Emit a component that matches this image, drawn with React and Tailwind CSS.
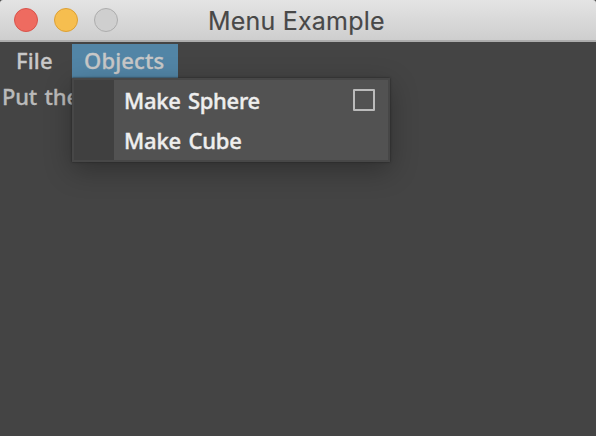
function TitleBar() {
  return (
    <header className="relative flex h-[42px] items-center rounded-t-[3px] border-b-2 border-[#acacac] bg-linear-to-b from-[#e4e4e4] to-[#cecece] pl-3.5">
      <div className="flex gap-4">
        <span className="size-6 rounded-full border border-[#d9534b] bg-[#ee6b60]" />
        <span className="size-6 rounded-full border border-[#dda034] bg-[#f6be4f]" />
        <span className="size-6 rounded-full border border-[#adadad] bg-[#cfcfcf]" />
      </div>
      <h1 className='absolute left-[208px] top-0 whitespace-nowrap font-["Inter",sans-serif] text-[25px] leading-[42px] font-normal tracking-[0.2px] text-[#484848] [-webkit-text-stroke:0.15px_#484848]'>
        Menu Example
      </h1>
    </header>
  );
}

function ObjectsMenu() {
  return (
    <div className="absolute left-0 top-[34px] z-10 w-[318px] border-2 border-[#474747] bg-[#525252] shadow-[0_0_2px_#202020,0_8px_28px_rgba(0,0,0,0.3)]">
      <div className="flex h-20">
        <div className="w-10 bg-[#404040]" />
        <div className="flex flex-1 flex-col pl-2.5 pr-[13px] text-[22px] font-medium tracking-[-0.3px] [word-spacing:2px] text-[#eeeeee] [-webkit-text-stroke:0.4px_#eeeeee]">
          <div className="flex h-10 items-center justify-between">
            <span className="whitespace-nowrap leading-10">Make Sphere</span>
            <span className="size-[22px] rounded-[1px] border-2 border-[#bbbbbb]" />
          </div>
          <div className="h-10 whitespace-nowrap leading-10 tracking-[-0.2px]">Make Cube</div>
        </div>
      </div>
    </div>
  );
}

export default function App() {
  return (
    <div className='h-[436px] w-[596px] overflow-hidden bg-[#444444] font-["Noto_Sans","Open_Sans",sans-serif]'>
      <TitleBar />
      <nav className="flex h-9 pt-0.5 text-[22px] font-medium tracking-[0.15px] text-[#c8c8c8] [-webkit-text-stroke:0.3px_#c8c8c8]">
        <div className="h-[34px] w-[72px] pl-4 leading-[32px]">File</div>
        <div className="relative h-[34px] w-[106px] bg-[#5285a6] pl-3 leading-[32px]">
          Objects
          <ObjectsMenu />
        </div>
      </nav>
      <main className="whitespace-nowrap pl-0.5 text-[22px] font-medium tracking-[-0.2px] [word-spacing:2px] leading-[36px] text-[#bababa] [-webkit-text-stroke:0.3px_#bababa]">
        Put the
      </main>
    </div>
  );
}
